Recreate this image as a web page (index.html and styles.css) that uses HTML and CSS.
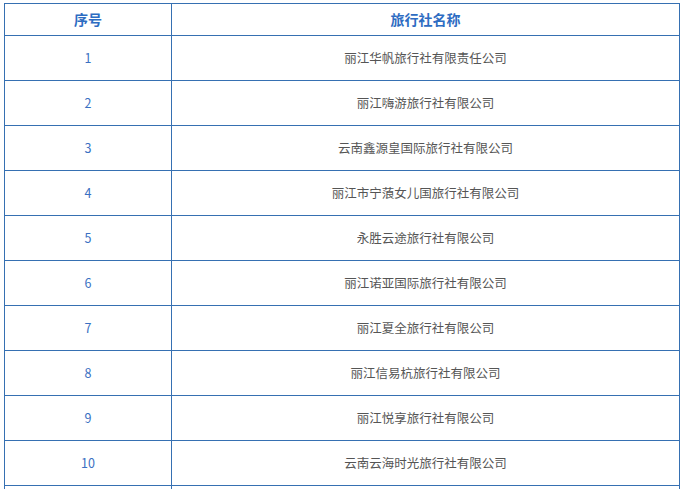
FILE: index.html
```html
<!DOCTYPE html>
<html lang="zh">
<head>
<meta charset="utf-8">
<link rel="stylesheet" href="styles.css">
</head>
<body>
<div class="wrap">
<table class="list">
<thead>
<tr><th class="c-no">序号</th><th class="c-name">旅行社名称</th></tr>
</thead>
<tbody>
<tr><td class="no">1</td><td class="name">丽江华帆旅行社有限责任公司</td></tr>
<tr><td class="no">2</td><td class="name">丽江嗨游旅行社有限公司</td></tr>
<tr><td class="no">3</td><td class="name">云南鑫源皇国际旅行社有限公司</td></tr>
<tr><td class="no">4</td><td class="name">丽江市宁蒗女儿国旅行社有限公司</td></tr>
<tr><td class="no">5</td><td class="name">永胜云途旅行社有限公司</td></tr>
<tr><td class="no">6</td><td class="name">丽江诺亚国际旅行社有限公司</td></tr>
<tr><td class="no">7</td><td class="name">丽江夏全旅行社有限公司</td></tr>
<tr><td class="no">8</td><td class="name">丽江信易杭旅行社有限公司</td></tr>
<tr><td class="no">9</td><td class="name">丽江悦享旅行社有限公司</td></tr>
<tr><td class="no">10</td><td class="name">云南云海时光旅行社有限公司</td></tr>
<tr><td class="no"></td><td class="name"></td></tr>
</tbody>
</table>
</div>
</body>
</html>
```
FILE: styles.css
```css
html, body {
  margin: 0;
  padding: 0;
  background: #ffffff;
  overflow: hidden;
}
.wrap {
  padding: 3px 0 0 4px;
}
.list {
  border-collapse: collapse;
  width: 676px;
  table-layout: fixed;
  font-family: "Noto Sans CJK SC", "Noto Sans", sans-serif;
}
.list th, .list td {
  border: 1px solid #3670b2;
  text-align: center;
  vertical-align: middle;
  padding: 0 0 1px 0;
}
.list th {
  height: 30px;
  font-size: 14px;
  font-weight: bold;
  color: #2d6cc2;
}
.c-no {
  width: 166px;
}
.list td {
  height: 43px;
  font-size: 12.5px;
}
.no {
  color: #3a70c2;
}
.name {
  color: #555555;
}
```
